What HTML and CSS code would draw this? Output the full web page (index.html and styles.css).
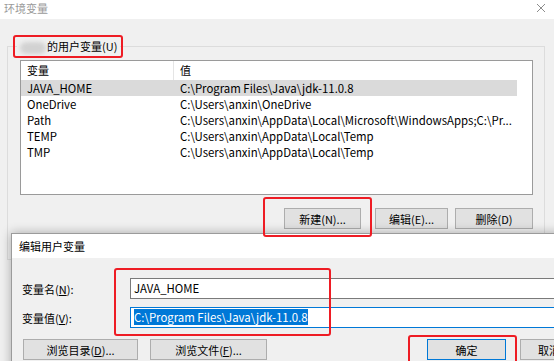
FILE: index.html
```html
<!DOCTYPE html>
<html lang="zh-CN">
<head>
    <meta charset="UTF-8">
    <meta name="viewport" content="width=device-width, initial-scale=1.0">
    <title>环境变量</title>
    <link rel="stylesheet" href="styles.css">
</head>
<body>
    <div class="desktop">
        <div class="window env">
            <div class="titlebar">
                <span class="title">环境变量</span>
                <svg class="close" width="10" height="10" viewBox="0 0 10 10">
                    <path d="M1 1 L9 9 M9 1 L1 9" stroke="#8c8c8c" stroke-width="1" fill="none"/>
                </svg>
            </div>
            <div class="env-body">
                <fieldset class="group">
                    <legend><span class="blur"></span>的用户变量(U)</legend>
                    <div class="listview">
                        <div class="lv-head">
                            <div class="c1">变量</div>
                            <div class="c2">值</div>
                        </div>
                        <div class="lv-row selected"><div class="c1">JAVA_HOME</div><div class="c2">C:\Program Files\Java\jdk-11.0.8</div></div>
                        <div class="lv-row"><div class="c1">OneDrive</div><div class="c2">C:\Users\anxin\OneDrive</div></div>
                        <div class="lv-row"><div class="c1">Path</div><div class="c2">C:\Users\anxin\AppData\Local\Microsoft\WindowsApps;C:\Pr...</div></div>
                        <div class="lv-row"><div class="c1">TEMP</div><div class="c2">C:\Users\anxin\AppData\Local\Temp</div></div>
                        <div class="lv-row"><div class="c1">TMP</div><div class="c2">C:\Users\anxin\AppData\Local\Temp</div></div>
                    </div>
                    <div class="btn-row">
                        <button class="btn btn-new">新建(N)...</button>
                        <button class="btn btn-edit">编辑(E)...</button>
                        <button class="btn btn-del">删除(D)</button>
                    </div>
                </fieldset>
            </div>
        </div>

        <div class="window edit">
            <div class="titlebar2">编辑用户变量</div>
            <div class="edit-body">
                <div class="form">
                    <label>变量名(<u>N</u>):</label>
                    <div class="field">JAVA_HOME</div>
                    <label>变量值(<u>V</u>):</label>
                    <div class="field focused"><span class="sel">C:\Program Files\Java\jdk-11.0.8</span></div>
                </div>
                <div class="dlg-buttons">
                    <button class="btn btn-dir">浏览目录(<u>D</u>)...</button>
                    <button class="btn btn-file">浏览文件(<u>F</u>)...</button>
                    <button class="btn btn-ok">确定</button>
                    <button class="btn btn-cancel">取消</button>
                </div>
            </div>
        </div>

        <div class="mark mark-user"></div>
        <div class="mark mark-new"></div>
        <div class="mark mark-fields"></div>
        <div class="mark mark-ok"></div>
    </div>
</body>
</html>
```

FILE: styles.css
```css
* {
    box-sizing: border-box;
}
body {
    margin: 0;
    font-family: "Noto Sans CJK SC", "Noto Sans", sans-serif;
    font-size: 11px;
    color: #000;
    background-color: #f0f0f0;
}
.desktop {
    position: relative;
    width: 554px;
    height: 361px;
    overflow: hidden;
}
.env {
    height: 100%;
    background-color: #f0f0f0;
}
.titlebar {
    height: 19px;
    background-color: #fff;
    display: flex;
    justify-content: space-between;
    align-items: flex-start;
    padding: 0 8px 0 4px;
}
.titlebar .title {
    color: #9a9a9a;
    line-height: 16px;
}
.titlebar .close {
    margin-top: 3px;
}
.env-body {
    padding: 19px 9px 0 7px;
}
.group {
    margin: 0;
    border: 1px solid #dcdcdc;
    padding: 5px 11px 30px 12px;
}
.group legend {
    margin-left: -3px;
    padding: 0 3px 0 1px;
    line-height: 17px;
}
.blur {
    display: inline-block;
    width: 26px;
    height: 12px;
    margin: 0 1px 0 2px;
    vertical-align: middle;
    background-color: #d2d2d2;
    border-radius: 6px;
    filter: blur(2px);
}
.listview {
    height: 135px;
    background-color: #fff;
    border: 1px solid #9a9a9a;
}
.lv-head, .lv-row {
    display: flex;
    width: 496px;
    white-space: nowrap;
}
.lv-head {
    height: 19px;
    line-height: 18px;
}
.lv-row {
    height: 16px;
    line-height: 16px;
    font-size: 11.4px;
}
.lv-row.selected {
    background-color: #dadada;
}
.c1 {
    flex-shrink: 0;
    width: 153px;
    padding-left: 6px;
}
.lv-head .c1 {
    border-right: 1px solid #e5e5e5;
}
.c2 {
    padding-left: 6px;
}
.btn-row {
    display: flex;
    justify-content: flex-end;
    margin-top: 13px;
}
.btn {
    height: 21px;
    padding: 0;
    font: inherit;
    color: #000;
    background-color: #e1e1e1;
    border: 1px solid #adadad;
    display: flex;
    align-items: center;
    justify-content: center;
}
.btn-new {
    width: 77px;
    margin-right: 14px;
}
.btn-edit {
    width: 73px;
    margin-right: 7px;
}
.btn-del {
    width: 78px;
}

/* edit dialog on top */
.edit {
    position: absolute;
    left: 11px;
    top: 233px;
    width: 599px;
    height: 160px;
    background-color: #f0f0f0;
    border: 1px solid #9b9b9b;
    box-shadow: 0 0 10px rgba(0,0,0,0.3);
}
.titlebar2 {
    height: 24px;
    line-height: 24px;
    padding-left: 7px;
    background-color: #fff;
}
.edit-body {
    padding: 20px 11px 0 11px;
}
.form {
    display: grid;
    grid-template-columns: 107px 1fr;
    row-gap: 8px;
    align-items: center;
}
.form label {
    margin-left: -1px;
}
.field {
    height: 21px;
    line-height: 19px;
    padding-left: 3px;
    font-size: 11.4px;
    background-color: #fff;
    border: 1px solid #7a7a7a;
    white-space: nowrap;
}
.field.focused {
    border-color: #0078d7;
}
.sel {
    display: inline-block;
    line-height: 16px;
    color: #fff;
    background-color: #0078d7;
}
.dlg-buttons {
    display: flex;
    margin-top: 11px;
}
.btn-dir {
    width: 115px;
    margin-right: 12px;
}
.btn-file {
    width: 117px;
}
.btn-ok {
    width: 79px;
    margin-left: auto;
    margin-right: 14px;
    border-color: #0078d7;
}
.btn-cancel {
    width: 58px;
    margin-right: 20px;
}

/* red annotation boxes */
.mark {
    position: absolute;
    border: 2px solid #ee1c24;
    border-radius: 3px;
}
.mark-user {
    left: 13px;
    top: 35px;
    width: 110px;
    height: 23px;
}
.mark-new {
    left: 263px;
    top: 197px;
    width: 109px;
    height: 40px;
}
.mark-fields {
    left: 114px;
    top: 268px;
    width: 217px;
    height: 68px;
}
.mark-ok {
    left: 408px;
    top: 335px;
    width: 109px;
    height: 32px;
}
```
